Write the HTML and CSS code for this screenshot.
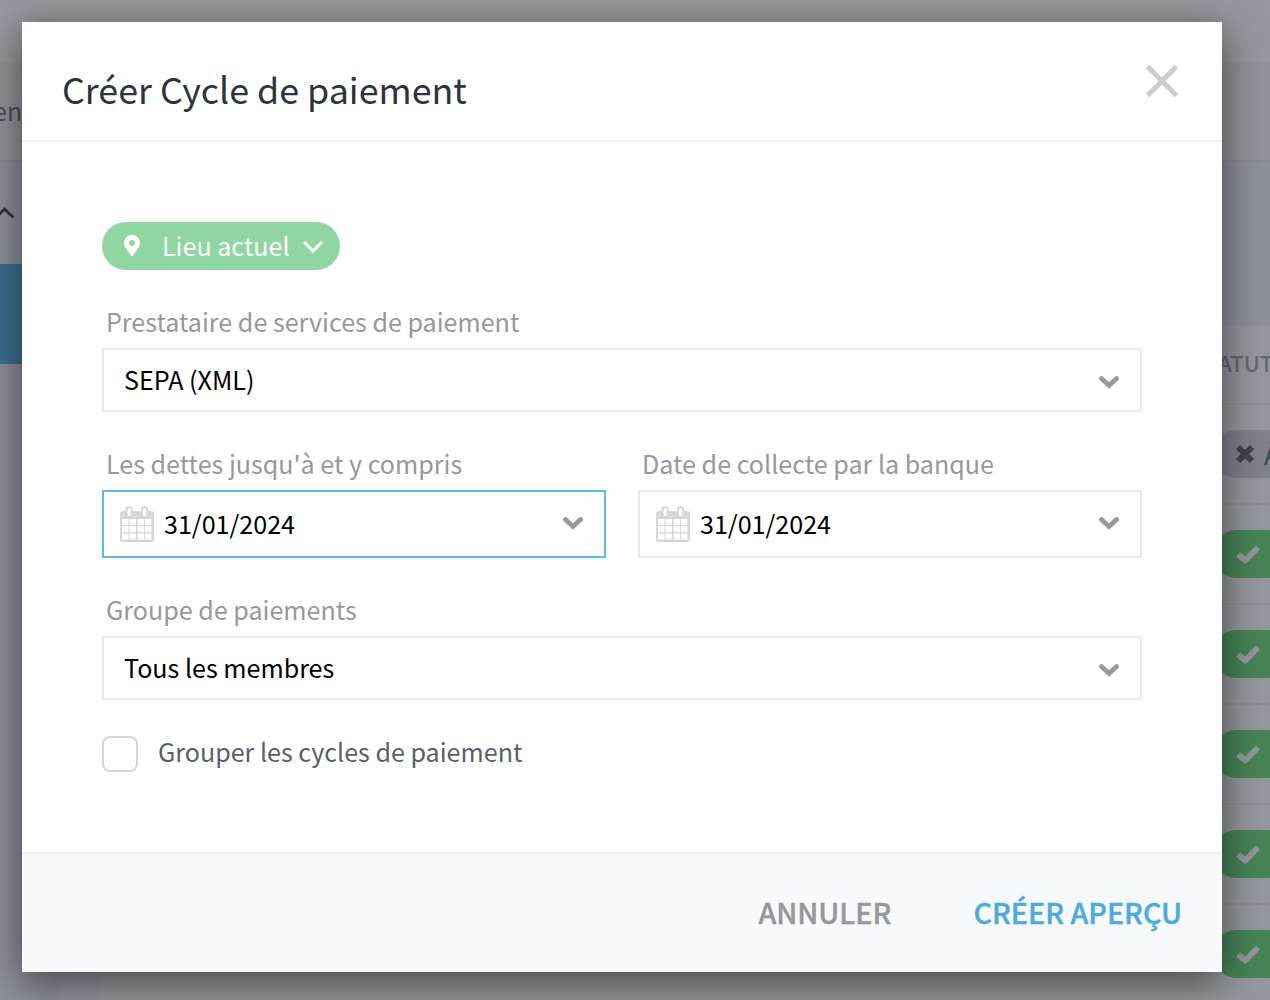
FILE: index.html
```
<!DOCTYPE html>
<html lang="fr">
<head>
	<meta charset="UTF-8">
	<title>Créer Cycle de paiement</title>
	<link rel="stylesheet" href="styles.css">
</head>
<body>
<svg class="defs">
	<symbol id="check" viewBox="0 0 24 20"><path d="M2 10.500L9.300 16.500L22 3.500" fill="none" stroke="currentColor" stroke-width="5.800" stroke-linejoin="miter"/></symbol>
	<symbol id="down" viewBox="0 0 20 14"><path d="M2.500 3.500L10 10.500L17.500 3.500" fill="none" stroke="currentColor" stroke-width="4.800" stroke-linecap="round"/></symbol>
	<symbol id="calendar" viewBox="0 0 34 36">
		<path fill="currentColor" fill-rule="evenodd" d="M3 5H5.500V3.500a3.500 3.500 0 0 1 7 0V5H21V3.500a3.500 3.500 0 0 1 7 0V5H31a3 3 0 0 1 3 3V33a3 3 0 0 1-3 3H3a3 3 0 0 1-3-3V8a3 3 0 0 1 3-3zM9 2a1.500 1.500 0 0 0-1.500 1.500V8.500a1.500 1.500 0 0 0 3 0V3.500A1.500 1.500 0 0 0 9 2zM24.500 2a1.500 1.500 0 0 0-1.500 1.500V8.500a1.500 1.500 0 0 0 3 0V3.500A1.500 1.500 0 0 0 24.500 2zM2 13v6h6.500v-6zM9.500 13v6h6.500v-6zM17.500 13v6h6.500v-6zM25 13v6h6.500v-6zM2 20v6h6.500v-6zM9.500 20v6h6.500v-6zM17.500 20v6h6.500v-6zM25 20v6h6.500v-6zM2 27.500v6h6.500v-6zM9.500 27.500v6h6.500v-6zM17.500 27.500v6h6.500v-6zM25 27.500v6h6.500v-6z"/>
	</symbol>
</svg>
<div class="page">
	<div class="topbar"></div>
	<div class="nav"><span class="nav-item">en</span></div>
	<div class="main">
		<div class="sidebar">
			<svg class="up" width="16" height="14" viewBox="0 0 16 14"><path d="M-4 12.500L4.500 4L13.500 12.500" fill="none" stroke="currentColor" stroke-width="3"/></svg>
			<div class="selected"></div>
		</div>
		<div class="gutter"></div>
		<div class="content">
			<div class="table">
				<div class="th">ATUT</div>
				<div class="tr"><span class="pill off"><svg width="20" height="20" viewBox="0 0 20 20"><path d="M3 3L17 17M17 3L3 17" stroke="currentColor" stroke-width="6"/></svg>A</span></div>
				<div class="tr"><span class="pill"><svg width="24" height="20"><use href="#check"/></svg></span></div>
				<div class="tr"><span class="pill"><svg width="24" height="20"><use href="#check"/></svg></span></div>
				<div class="tr"><span class="pill"><svg width="24" height="20"><use href="#check"/></svg></span></div>
				<div class="tr"><span class="pill"><svg width="24" height="20"><use href="#check"/></svg></span></div>
				<div class="tr"><span class="pill"><svg width="24" height="20"><use href="#check"/></svg></span></div>
			</div>
		</div>
	</div>
</div>
<div class="overlay">
	<div class="modal">
		<div class="modal-head">
			<h1>Créer Cycle de paiement</h1>
			<svg class="close" width="32" height="32" viewBox="0 0 32 32"><path d="M1.500 1.500L30.500 30.500M30.500 1.500L1.500 30.500" stroke="currentColor" stroke-width="5"/></svg>
		</div>
		<div class="modal-body">
			<div class="location">
				<svg class="pin" width="16" height="22" viewBox="0 0 16 22"><path fill="currentColor" fill-rule="evenodd" d="M8 0a8 8 0 0 1 8 8c0 4-3.500 7.500-8 13.500C3.500 15.500 0 12 0 8a8 8 0 0 1 8-8zm0 5a3 3 0 1 0 0 6 3 3 0 0 0 0-6z"/></svg>
				<span>Lieu actuel</span>
				<svg class="caret" width="20" height="14" viewBox="0 0 20 14"><path d="M1 3L10 12L19 3" fill="none" stroke="currentColor" stroke-width="3"/></svg>
			</div>
			<div class="field provider">
				<label>Prestataire de services de paiement</label>
				<div class="select"><span>SEPA (XML)</span><svg class="arrow" width="20" height="14"><use href="#down"/></svg></div>
			</div>
			<div class="row">
				<div class="field">
					<label>Les dettes jusqu'à et y compris</label>
					<div class="select date focus"><svg class="cal" width="34" height="36"><use href="#calendar"/></svg><span>31/01/2024</span><svg class="arrow" width="20" height="14"><use href="#down"/></svg></div>
				</div>
				<div class="field">
					<label>Date de collecte par la banque</label>
					<div class="select date"><svg class="cal" width="34" height="36"><use href="#calendar"/></svg><span>31/01/2024</span><svg class="arrow" width="20" height="14"><use href="#down"/></svg></div>
				</div>
			</div>
			<div class="field group">
				<label>Groupe de paiements</label>
				<div class="select"><span>Tous les membres</span><svg class="arrow" width="20" height="14"><use href="#down"/></svg></div>
			</div>
			<div class="check-line"><i class="box"></i><span>Grouper les cycles de paiement</span></div>
		</div>
		<div class="modal-foot">
			<span class="btn">ANNULER</span>
			<span class="btn primary">CRÉER APERÇU</span>
		</div>
	</div>
</div>
</body>
</html>
```
FILE: styles.css
```
*{
	box-sizing: border-box;
}
body{
	margin: 0;
	height: 1000px;
	overflow: hidden;
	font-family: "Noto Sans CJK SC", "Noto Sans", sans-serif;
	font-size: 25.080px;
	color: #000;
}
svg{
	display: block;
	flex: none;
}
.defs{
	display: none;
}
/* page behind the dialog */
.page{
	height: 1000px;
	display: flex;
	flex-direction: column;
	overflow: hidden;
}
.topbar{
	height: 62px;
	flex: none;
	background-color: #95989c;
}
.nav{
	height: 100px;
	flex: none;
	background-color: #919498;
	border-bottom: 2px solid #878c92;
	line-height: 96px;
	color: #4a4f56;
}
.nav-item{
	margin-left: -7px;
}
.main{
	flex: 1;
	display: flex;
	background-color: #8d9199;
}
.sidebar{
	width: 58px;
	flex: none;
	padding-top: 43px;
}
.up{
	color: #30343b;
	margin-bottom: 45px;
}
.selected{
	height: 100px;
	background-color: #3e7190;
}
.gutter{
	width: 40px;
	flex: none;
	background-color: #91969c;
}
.content{
	flex: 1;
	padding-top: 163px;
}
.table{
	height: 675px;
	padding-left: 1115px;
	background-color: #95989c;
}
.th{
	height: 80px;
	padding-left: 5px;
	border-bottom: 2px solid #8d9196;
	line-height: 75px;
	font-size: 22px;
	font-weight: 500;
	color: #65696f;
}
.tr{
	width: 60px;
	height: 100px;
	padding-top: 25px;
	border-bottom: 2px solid #8d9196;
}
.pill{
	width: 120px;
	height: 48px;
	padding-left: 23px;
	display: flex;
	align-items: center;
	border-radius: 24px;
	background-color: #488457;
	color: #95989c;
}
.pill.off{
	padding-left: 22px;
	gap: 9px;
	background-color: #7f838a;
	color: #40444d;
}
/* dialog */
.overlay{
	position: absolute;
	top: 0;
	left: 0;
	width: 1270px;
	height: 1000px;
	padding: 22px 48px 28px 22px;
}
.modal{
	height: 950px;
	display: flex;
	flex-direction: column;
	background-color: #fff;
	box-shadow: 0 10px 40px rgba(0,0,0,0.55);
}
.modal-head{
	height: 120px;
	padding: 0 44px 0 40px;
	display: flex;
	justify-content: space-between;
	border-bottom: 2px solid #f3f3f4;
}
h1{
	margin: 0;
	height: 118px;
	line-height: 132px;
	font-size: 35.800px;
	font-weight: 400;
	color: #2d333c;
}
.close{
	margin-top: 43px;
	color: #ccc;
}
.modal-body{
	flex: 1;
	padding: 80px 80px 0;
}
.location{
	width: 238px;
	height: 48px;
	padding: 0 17px 0 22px;
	display: flex;
	align-items: center;
	border-radius: 24px;
	background-color: #90d6a3;
	color: #fff;
}
.location span{
	margin: 0 auto 0 22px;
	padding-bottom: 2px;
	line-height: 46px;
}
.field{
	flex: 1;
}
label{
	display: block;
	height: 52px;
	padding-left: 4px;
	line-height: 50px;
	color: #95989c;
}
.provider{
	margin-top: 26px;
}
.row{
	display: flex;
	gap: 32px;
	margin-top: 26px;
}
.group{
	margin-top: 26px;
}
.select{
	height: 64px;
	padding: 0 21px 0 20px;
	display: flex;
	align-items: center;
	border: 2px solid #e8e8e8;
}
.select span{
	padding-bottom: 2px;
}
.select.date{
	height: 68px;
	padding-left: 16px;
}
.select.focus{
	border-color: #60b9e2;
}
.cal{
	color: #d7d7db;
	margin-right: 10px;
}
.arrow{
	margin-left: auto;
	margin-top: 4px;
	color: #95989c;
}
.date .arrow{
	margin-top: -2px;
}
.check-line{
	margin-top: 36px;
	display: flex;
	align-items: center;
	height: 36px;
	gap: 20px;
	color: #595f67;
}
.check-line span{
	padding-bottom: 7px;
}
.box{
	width: 36px;
	height: 36px;
	border: 2px solid #d5d5da;
	border-radius: 8px;
}
.modal-foot{
	height: 120px;
	padding: 0 40px;
	display: flex;
	justify-content: flex-end;
	gap: 82px;
	border-top: 2px solid #f1f2f4;
	background-color: #f8f9fb;
	line-height: 115px;
	font-size: 28.700px;
	font-weight: 500;
	color: #95989c;
}
.btn{
	-webkit-text-stroke: 0.4px currentColor;
}
.primary{
	color: #4baade;
}
```
